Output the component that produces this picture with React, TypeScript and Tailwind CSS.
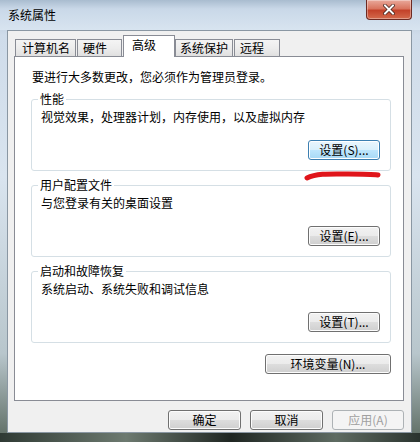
import React from "react";

const font = { fontFamily: '"Noto Sans CJK SC", "Noto Sans", sans-serif' };

function Btn({ label, w, hot, disabled }: { label: string; w: string; hot?: boolean; disabled?: boolean }) {
  const base = "h-[20px] rounded-[3px] border flex items-center justify-center text-[12px] leading-none";
  const style = hot
    ? "border-[#3c7fb1] bg-[linear-gradient(180deg,#eaf6fd_0%,#d9f0fc_50%,#bee6fd_51%,#a7d9f5_100%)] text-black shadow-[inset_0_0_0_1px_#fff]"
    : disabled
    ? "border-[#adb2b5] bg-[#f4f4f4] text-[#a0a0a0]"
    : "border-[#707070] bg-[linear-gradient(180deg,#f2f2f2_0%,#ebebeb_50%,#dddddd_51%,#cfcfcf_100%)] text-black shadow-[inset_0_0_0_1px_#fcfcfc]";
  return <div className={`${base} ${style} ${w}`}>{label}</div>;
}

function Group({ title, text, btn, hot }: { title: string; text: string; btn: string; hot?: boolean }) {
  return (
    <div className="relative ml-[16px] mr-[12px] h-[72px] rounded-[3px] border border-[#d5dfe5] flex flex-col pl-[9px] pr-[10px] pt-[10px]">
      <div className="absolute left-[6px] top-[-8px] bg-white px-[2px] text-[12px] leading-[14px] text-black">{title}</div>
      <div className="text-[12px] leading-[14px] text-black">{text}</div>
      <div className="flex justify-end mt-[16px]">
        <Btn label={btn} w="w-[72px]" hot={hot} />
      </div>
    </div>
  );
}

export default function App() {
  const tabs = [
    { t: "计算机名", w: "w-[61px]", pl: "pl-[6px]" },
    { t: "硬件", w: "w-[45px]", pl: "pl-[5px]" },
  ];
  const tabs2 = [
    { t: "系统保护", w: "w-[58px]", pl: "pl-[4px]" },
    { t: "远程", w: "w-[46px]", pl: "pl-[5px]" },
  ];
  const tabCls =
    "mt-[3px] h-[18px] border border-b-0 border-[#898c95] bg-[linear-gradient(180deg,#f4f4f4_0%,#ececec_50%,#dedede_100%)] text-[12px] leading-[16px] text-black";
  return (
    <div
      style={font}
      className="relative w-[420px] h-[442px] overflow-hidden flex flex-col bg-[linear-gradient(180deg,#aebfd0_0%,#cfdcea_8%,#d9e4ef_40%,#b8c6cc_80%,#5b6a60_100%)]"
    >
      {/* title bar */}
      <div className="h-[30px] flex items-start justify-between bg-[linear-gradient(180deg,#a9bccf_0%,#c9d8e8_30%,#d8e4f0_100%)]">
        <div className="pl-[8px] pt-[7px] text-[12px] leading-[16px] text-black">系统属性</div>
        <div className="mr-[8px] w-[46px] h-[20px] rounded-b-[4px] border border-t-0 border-[#6d2a22] bg-[linear-gradient(180deg,#e9a99b_0%,#d9755f_45%,#c3422a_55%,#d46a4c_100%)] flex items-center justify-center shadow-[inset_0_0_0_1px_rgba(255,255,255,0.35)]">
          <svg width="12" height="11" viewBox="0 0 12 11">
            <path d="M2 1.5 L10 9.5 M10 1.5 L2 9.5" stroke="#3a1a14" strokeWidth="3.4" strokeLinecap="square" />
            <path d="M2 1.5 L10 9.5 M10 1.5 L2 9.5" stroke="#ffffff" strokeWidth="2" strokeLinecap="square" />
          </svg>
        </div>
      </div>
      {/* client */}
      <div className="ml-[7px] mr-[8px] h-[403px] border border-[#8a97a3] bg-[#f0f0f0] flex flex-col">
        <div className="pl-[7px] pt-[4px] flex items-end">
          {tabs.map((t) => (
            <div key={t.t} className={`${tabCls} ${t.w} ${t.pl} mr-[1px] -mb-[1px]`}>{t.t}</div>
          ))}
          <div className="relative z-10 w-[52px] h-[22px] -mb-[1px] -mr-[1px] border border-b-0 border-[#898c95] bg-white pl-[8px] pt-[1px] text-[12px] leading-[16px] text-black">
            高级
          </div>
          {tabs2.map((t) => (
            <div key={t.t} className={`${tabCls} ${t.w} ${t.pl} ml-[1px] -mb-[1px]`}>{t.t}</div>
          ))}
        </div>
        <div className="ml-[6px] w-[390px] h-[345px] border border-[#898c95] bg-white flex flex-col relative">
          <div className="pl-[17px] pt-[13px] text-[12px] leading-[14px] text-black">要进行大多数更改，您必须作为管理员登录。</div>
          <div className="mt-[15px] flex flex-col gap-[14px]">
            <Group title="性能" text="视觉效果，处理器计划，内存使用，以及虚拟内存" btn="设置(S)..." hot />
            <Group title="用户配置文件" text="与您登录有关的桌面设置" btn="设置(E)..." />
            <Group title="启动和故障恢复" text="系统启动、系统失败和调试信息" btn="设置(T)..." />
          </div>
          <div className="flex justify-end pr-[12px] mt-[11px]">
            <Btn label="环境变量(N)..." w="w-[126px]" />
          </div>
          <svg className="absolute left-[288px] top-[112px]" width="80" height="14" viewBox="0 0 80 14">
            <path d="M4 9 C 14 4, 30 5, 45 5 C 58 5, 68 5, 75 6" stroke="#e0151b" strokeWidth="5" fill="none" strokeLinecap="round" />
          </svg>
        </div>
        <div className="flex justify-end gap-[9px] pr-[7px] mt-[9px]">
          <Btn label="确定" w="w-[73px]" />
          <Btn label="取消" w="w-[73px]" />
          <Btn label="应用(A)" w="w-[72px]" disabled />
        </div>
      </div>
      <div className="flex-1 bg-[linear-gradient(90deg,#2f3a34_0%,#6d7a70_30%,#1f2622_55%,#5e6b62_80%,#2a332e_100%)]" />
    </div>
  );
}
